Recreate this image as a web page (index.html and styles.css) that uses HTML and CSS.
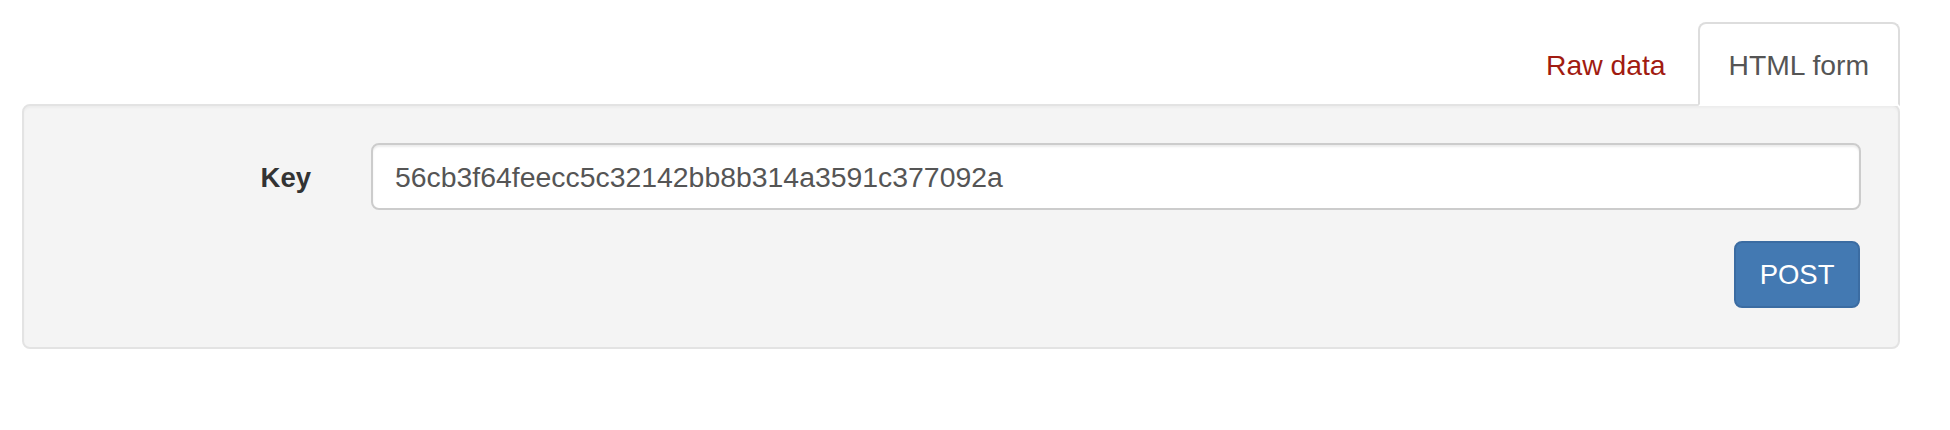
FILE: index.html
```html
<!DOCTYPE html>
<html lang="en">
<head>
<meta charset="utf-8">
<title>HTML form</title>
<link rel="stylesheet" href="styles.css">
</head>
<body>
<div class="page">
  <ul class="tabs">
    <li class="tab"><a class="tab-link" href="#raw">Raw data</a></li>
    <li class="tab tab-active"><a class="tab-link" href="#form">HTML form</a></li>
  </ul>
  <div class="well">
    <form class="form-horizontal">
      <div class="form-group">
        <label class="control-label" for="key">Key</label>
        <div class="field">
          <input class="form-control" id="key" name="key" type="text" value="56cb3f64feecc5c32142bb8b314a3591c377092a">
        </div>
      </div>
      <div class="form-actions">
        <button class="btn-primary" type="button">POST</button>
      </div>
    </form>
  </div>
</div>
</body>
</html>
```

FILE: styles.css
```css
* {
  box-sizing: border-box;
}

html, body {
  margin: 0;
  padding: 0;
  background: #ffffff;
}

body {
  font-family: "Liberation Sans", Arial, Helvetica, sans-serif;
  font-size: 27.5px;
  line-height: 39px;
  color: #333333;
}

.page {
  padding: 22px 50px 0 22px;
}

.tabs {
  list-style: none;
  margin: 0 0 -2px 0;
  padding: 0;
  display: flex;
  justify-content: flex-end;
}

.tab {
  margin-right: 1px;
}

.tab:last-child {
  margin-right: 0;
}

.tab-link {
  display: block;
  padding: 21.5px 29px 19.5px;
  border: 2px solid transparent;
  border-radius: 8px 8px 0 0;
  color: #a11b11;
  text-decoration: none;
  font-size: 28.3px;
  line-height: 39px;
}

.tab-active .tab-link {
  position: relative;
  z-index: 1;
  background: #ffffff;
  color: #555555;
  border-color: #dddddd;
  border-bottom-color: #ffffff;
}

.well {
  background: #f4f4f4;
  border: 2px solid #e3e3e3;
  border-radius: 8px;
  padding: 37px 37px 39px;
  box-shadow: inset 0 2px 2px rgba(0, 0, 0, 0.03);
}

.form-group {
  display: grid;
  grid-template-columns: 16.6667% 1fr;
  margin: 0 -30px 31px;
}

.control-label {
  padding: 15px 30px 0;
  text-align: right;
  font-weight: bold;
  color: #333333;
}

.field {
  padding: 0 30px;
}

.form-control {
  display: block;
  width: 100%;
  height: 67px;
  padding: 2px 22px 0;
  font-family: inherit;
  font-size: 28.4px;
  line-height: 39px;
  color: #555555;
  background: #ffffff;
  border: 2px solid #cccccc;
  border-radius: 8px;
  box-shadow: inset 0 2px 2px rgba(0, 0, 0, 0.075);
  outline: none;
}

.form-actions {
  display: flex;
  justify-content: flex-end;
  padding-right: 1px;
}

.btn-primary {
  height: 67px;
  padding: 0 23.5px;
  font-family: inherit;
  font-size: 27.5px;
  line-height: 39px;
  color: #ffffff;
  background: #4379b2;
  border: 2px solid #3b6ca2;
  border-radius: 8px;
  cursor: pointer;
}
```
